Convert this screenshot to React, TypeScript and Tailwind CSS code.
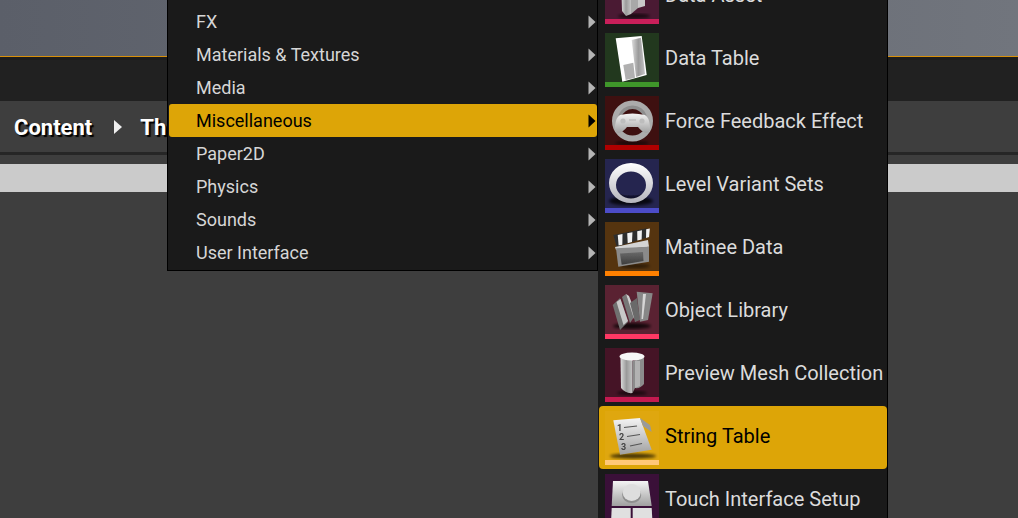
import React from "react";

const font = { fontFamily: "Roboto, 'Liberation Sans', sans-serif" };

const leftItems = ["FX", "Materials & Textures", "Media", "Miscellaneous", "Paper2D", "Physics", "Sounds", "User Interface"];

function Defs() {
  return (
    <svg width="0" height="0" className="absolute">
      <defs>
        <linearGradient id="metal" x1="0" y1="0" x2="0" y2="1">
          <stop offset="0" stopColor="#f4f4f4" />
          <stop offset="1" stopColor="#a0a0a0" />
        </linearGradient>
        <linearGradient id="metalH" x1="0" y1="0" x2="1" y2="0">
          <stop offset="0" stopColor="#dcdcdc" />
          <stop offset="0.5" stopColor="#9a9a9a" />
          <stop offset="1" stopColor="#c4c4c4" />
        </linearGradient>
        <linearGradient id="ring" x1="0" y1="0" x2="0" y2="1">
          <stop offset="0" stopColor="#ffffff" />
          <stop offset="1" stopColor="#b4b4bc" />
        </linearGradient>
        <linearGradient id="screen" x1="0" y1="0" x2="0" y2="1">
          <stop offset="0" stopColor="#6a6a6a" />
          <stop offset="1" stopColor="#3c3c3c" />
        </linearGradient>
        <filter id="soft"><feGaussianBlur stdDeviation="1.6" /></filter>
        <filter id="soft2"><feGaussianBlur stdDeviation="0.35" /></filter>
      </defs>
    </svg>
  );
}

function Shadow({ cx, cy, rx, ry, o = 0.65 }: { cx: number; cy: number; rx: number; ry: number; o?: number }) {
  return <ellipse cx={cx} cy={cy} rx={rx} ry={ry} fill="#000" opacity={o} filter="url(#soft)" />;
}

function DataAsset() {
  return (
    <g filter="url(#soft2)">
      <Shadow cx={29} cy={46} rx={16} ry={2.5} />
      <path d="M16 6 L26 10 L26 44 L21 46 L17 41 Z" fill="url(#metalH)" />
      <path d="M26 10 L33 6 L33 38 L26 44 Z" fill="#a8a8a8" />
      <path d="M33 6 L40 8 L40 36 L33 38 Z" fill="#c8c8c8" />
    </g>
  );
}

function DataTable() {
  return (
    <g filter="url(#soft2)">
      <path d="M10.7 5.3 L36.7 3 L41.7 42 L17.3 48.7 Z" fill="#fff" />
      <path d="M26.7 7 L36 4.7 L40 41 L31 44 Z" fill="url(#metalH)" />
      <path d="M18.3 32 L28.3 29.7 L30 44.7 L20.7 47 Z" fill="#b0b0b0" />
    </g>
  );
}

function ForceFeedback() {
  return (
    <g filter="url(#soft2)">
      <Shadow cx={27} cy={47} rx={17} ry={1.8} />
      <circle cx={27.5} cy={25} r={17.5} fill="none" stroke="#ababab" strokeWidth={6} />
      <path d="M15 20 A13 12 0 0 1 40 20" fill="none" stroke="#8e8e8e" strokeWidth={3.5} />
      <path d="M15 19 Q27.5 16 40 19 Q44 21 45 30 Q46 37 41 37 Q37 36 33 31 L22 31 Q18 36 14 37 Q9 37 10 30 Q11 21 15 19 Z" fill="url(#metal)" />
      <circle cx={18} cy={25} r={2.6} fill="#bdbdbd" />
      <circle cx={37} cy={25} r={2.6} fill="#bdbdbd" />
      <path d="M24 24 L31 24" stroke="#bdbdbd" strokeWidth={1.4} />
    </g>
  );
}

function LevelVariant() {
  return (
    <g filter="url(#soft2)">
      <Shadow cx={26} cy={42} rx={22} ry={4.5} o={0.8} />
      <path d="M13 34 Q26 40 39 34 L39 39 L13 39 Z" fill="#14142e" opacity={0.8} />
      <path
        fillRule="evenodd"
        d="M4 24 A22 20 0 1 0 48 24 A22 20 0 1 0 4 24 Z M11 26 A15 13.5 0 1 1 41 26 A15 13.5 0 1 1 11 26 Z"
        fill="url(#ring)"
      />
    </g>
  );
}

function Matinee() {
  return (
    <g filter="url(#soft2)">
      <Shadow cx={30} cy={44} rx={15} ry={2} o={0.5} />
      <path d="M8.3 13 L41.7 6.3 L43 15.3 L11.7 24.7 Z" fill="#2e2e2e" />
      <path d="M11 13 L15.5 12 L18 22.7 L14.5 23.6 Z M20 11.2 L25 10.2 L27 20 L23 21.2 Z M29.5 9.2 L34 8.3 L36 17.4 L32 18.6 Z M38 7.3 L41.5 6.6 L42.8 15 L40 15.9 Z" fill="#f2f2f2" transform="skewX(-14) translate(5 0)" />
      <path d="M10 25 L43 18 L44 24.7 L11 28 Z" fill="#d4d4d4" />
      <path d="M11 26.3 L44 24.7 L44 39.7 L13.3 44.7 Z" fill="#8a8a8a" />
      <path d="M15 31.5 L38 30 L38.5 39 L16.7 42.7 Z" fill="url(#screen)" />
    </g>
  );
}

function ObjectLibrary() {
  return (
    <g filter="url(#soft2)">
      <Shadow cx={27} cy={41} rx={19} ry={3} o={0.8} />
      <path d="M7.7 20 L15 13 L23 37 L15 45 Z" fill="#6f6f6f" />
      <path d="M11.5 17 L15.5 14 L23 36 L18.5 40 Z" fill="#c8c8c8" />
      <path d="M17 12 L21 9 L29 32 L25 38 Z" fill="#777777" />
      <path d="M21 9 L24 11 L32 31 L29 34 Z" fill="#cfcfcf" />
      <path d="M25 18 L32 13 L35 35 L30 37 Z" fill="#6a6a6a" />
      <path d="M31.7 6.7 L47.7 8.3 L43 35 L35 36.7 Z" fill="#878787" />
      <path d="M38 9 L41 9 L38 34 L36.5 34 Z" fill="#d6d6d6" />
    </g>
  );
}

function PreviewMesh() {
  return (
    <g filter="url(#soft2)">
      <Shadow cx={27} cy={45} rx={15} ry={2.2} />
      <path d="M15.5 10 L16 40 Q21 46 27.5 45 L27.5 12 Z" fill="url(#metalH)" />
      <path d="M27.5 13 L27.5 45 L30 40 Q35 41 39 36 L39 10 Z" fill="#8c8c8c" />
      <path d="M30 13 L35 13 L35 38 L30 40 Z" fill="#b2b2b2" />
      <ellipse cx={27} cy={8.5} rx={12.5} ry={4} fill="#f6f6f6" />
    </g>
  );
}

function StringTable() {
  return (
    <g filter="url(#soft2)">
      <Shadow cx={28} cy={45} rx={23} ry={2.6} o={0.7} />
      <path d="M8.3 9.3 L35 7 L46.7 38.7 L15 43.7 Z" fill="url(#metal)" />
      <path d="M35 7 L45 14 L46.7 21 L38 15 Z" fill="#9a9a9a" />
      <g stroke="#555" strokeWidth={1.2}>
        <path d="M19 16.5 L32 15" />
        <path d="M22 25.5 L35 23.5" />
        <path d="M25 35 L37 32.5" />
      </g>
      <text x="12" y="20" fontSize="9" fontWeight="700" fill="#444">1</text>
      <text x="14" y="29" fontSize="9" fontWeight="700" fill="#444">2</text>
      <text x="16" y="38.5" fontSize="9" fontWeight="700" fill="#444">3</text>
    </g>
  );
}

function TouchInterface() {
  return (
    <g filter="url(#soft2)">
      <path d="M8 7 L43 7 L46.7 32 L6.7 32 Z" fill="url(#metal)" />
      <ellipse cx={26.7} cy={21} rx={9.5} ry={8} fill="#8e8e8e" />
      <ellipse cx={26.7} cy={18.5} rx={9} ry={8.5} fill="#dedede" />
      <path d="M6.7 34 L25.7 34 L25.7 49 L6 49 Z" fill="#e0e0e0" />
      <path d="M27.7 34 L46.7 34 L47.5 49 L27.7 49 Z" fill="#e0e0e0" />
    </g>
  );
}

const rightItems = [
  { label: "Data Asset", bg: "bg-[#4a1a33]", strip: "bg-[#c91f5a]", Icon: DataAsset },
  { label: "Data Table", bg: "bg-[#22381e]", strip: "bg-[#3f962a]", Icon: DataTable },
  { label: "Force Feedback Effect", bg: "bg-[#3e1010]", strip: "bg-[#b00000]", Icon: ForceFeedback },
  { label: "Level Variant Sets", bg: "bg-[#25254f]", strip: "bg-[#4c4cc8]", Icon: LevelVariant },
  { label: "Matinee Data", bg: "bg-[#55340f]", strip: "bg-[#ff8000]", Icon: Matinee },
  { label: "Object Library", bg: "bg-[#5a2232]", strip: "bg-[#ff3864]", Icon: ObjectLibrary },
  { label: "Preview Mesh Collection", bg: "bg-[#451426]", strip: "bg-[#c41a50]", Icon: PreviewMesh },
  { label: "String Table", bg: "bg-[#dfa70f]", strip: "bg-[#ffc878]", Icon: StringTable, active: true },
  { label: "Touch Interface Setup", bg: "bg-[#3a1038]", strip: "bg-[#a02090]", Icon: TouchInterface },
];

function Arrow({ dark }: { dark?: boolean }) {
  return (
    <svg width="8" height="16" viewBox="0 0 8 16" className="shrink-0">
      <path d="M0.5 1.5 L7.5 8 L0.5 14.5 Z" fill={dark ? "#000" : "#b5b5b5"} />
    </svg>
  );
}

export default function App() {
  return (
    <div className="relative h-[518px] w-[1018px] overflow-hidden bg-[#3e3e3e]" style={font}>
      <Defs />
      <div className="h-[56px] bg-[linear-gradient(90deg,#5b5f69,#71757d)]" />
      <div className="h-[1px] bg-[#d8900a]" />
      <div className="h-[3px] bg-[#1c1c1c]" />
      <div className="h-[41px] bg-[#212121]" />
      <div className="flex h-[51px] items-center pl-[14px] pt-[1px] text-[22px] font-bold text-white [text-shadow:2px_2px_1px_#000]">
        <span>Content</span>
        <svg width="10" height="16" viewBox="0 0 10 16" className="ml-[21px] mr-[17px]">
          <path d="M1 1 L9 8 L1 15 Z" fill="#efefef" />
        </svg>
        <span>Th</span>
      </div>
      <div className="h-[3px] bg-[#262626]" />
      <div className="h-[9px]" />
      <div className="h-[28px] bg-[#cbcbcb]" />

      <div className="absolute left-[167px] top-0 flex w-[431px] flex-col border-b border-l border-r border-b-black border-l-black border-r-black bg-[#1a1a1a] pt-[5px] pb-[1px] pl-[1px] text-[18px] text-[#d6d6d6]">
        {leftItems.map((t) => {
          const active = t === "Miscellaneous";
          return (
            <div
              key={t}
              className={
                active
                  ? "flex h-[33px] items-center justify-between rounded-[3px] bg-[#dda507] pl-[27px] pr-[1px] text-black"
                  : "flex h-[33px] items-center justify-between pl-[27px] pr-[1px]"
              }
            >
              <span>{t}</span>
              <Arrow dark={active} />
            </div>
          );
        })}
      </div>

      <div className="absolute left-[598px] top-[-35px] flex h-[560px] w-[290px] flex-col border-r-[1px] border-r-black bg-[#1a1a1a] pl-[1px] text-[20px] text-[#dcdcdc]">
        {rightItems.map(({ label, bg, strip, Icon, active }) => (
          <div
            key={label}
            className={
              active
                ? "flex h-[63px] shrink-0 items-center gap-[6px] rounded-[4px] bg-[#dda507] pl-[6px] text-black"
                : "flex h-[63px] shrink-0 items-center gap-[6px] pl-[6px]"
            }
          >
            <div className="flex h-[54px] w-[54px] shrink-0 flex-col">
              <div className={`h-[49px] ${bg}`}>
                <svg width="54" height="49" viewBox="0 0 54 49" className="block">
                  <Icon />
                </svg>
              </div>
              <div className={`h-[5px] ${strip}`} />
            </div>
            <span className="whitespace-nowrap pb-[4px]">{label}</span>
          </div>
        ))}
      </div>
    </div>
  );
}
